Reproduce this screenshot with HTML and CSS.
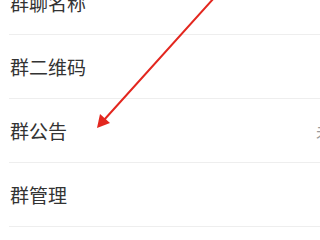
FILE: index.html
```html
<!DOCTYPE html>
<html lang="zh">
<head>
<meta charset="utf-8">
<link rel="stylesheet" href="styles.css">
</head>
<body>
<div class="screen">
  <ul class="list">
    <li class="row"><span class="label">群聊名称</span></li>
    <li class="row"><span class="label">群二维码</span></li>
    <li class="row"><span class="label">群公告</span><span class="value">未设置</span></li>
    <li class="row"><span class="label">群管理</span></li>
  </ul>
  <svg class="arrow" width="320" height="240" viewBox="0 0 320 240">
    <line x1="214" y1="-2" x2="104" y2="120" stroke="#e3271f" stroke-width="2" stroke-linecap="round"/>
    <polygon points="97,128 100,114 110,123" fill="#e3271f"/>
  </svg>
</div>
</body>
</html>
```

FILE: styles.css
```css
html, body {
  margin: 0;
  padding: 0;
  background: #ffffff;
}
.screen {
  position: relative;
  width: 320px;
  height: 240px;
  overflow: hidden;
  background: #ffffff;
}
.list {
  list-style: none;
  margin: -29px 0 0 0;
  padding: 0;
}
.row {
  display: flex;
  align-items: center;
  height: 63px;
  margin-left: 9px;
  border-bottom: 1px solid #eeeeee;
  font-family: "Noto Sans CJK SC", "Noto Sans", sans-serif;
  white-space: nowrap;
}
.label {
  flex: 0 0 306px;
  font-size: 19px;
  color: #333333;
  padding-left: 1px;
}
.value {
  font-size: 16px;
  color: #9a9a9a;
}
.arrow {
  position: absolute;
  left: 0;
  top: 0;
}
```
